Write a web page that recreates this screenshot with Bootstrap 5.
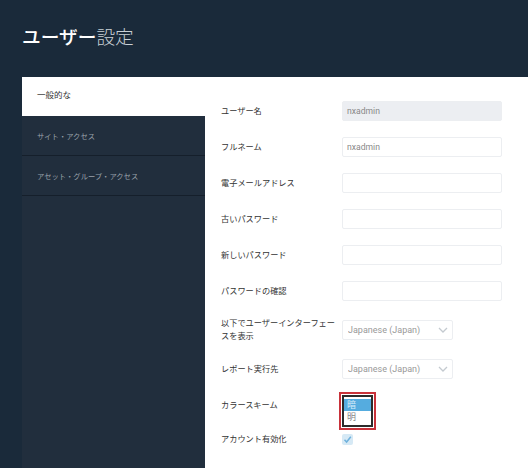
<!DOCTYPE html>
<html lang="ja">
<head>
<meta charset="utf-8">
<title>ユーザー設定</title>
<link href="https://cdn.jsdelivr.net/npm/bootstrap@5.3.0/dist/css/bootstrap.min.css" rel="stylesheet">
<style>
html,body{height:100%;overflow:hidden}
body{background:#1a2a3a;font-family:Roboto,"Noto Sans CJK JP",sans-serif;font-size:9px;color:#333}
.page-head{height:77px;padding-left:22px;padding-top:25px}
.page-ttl{font-size:18.7px;line-height:26px;margin:0;font-weight:300;color:#c9d0d6}
.page-ttl b{color:#fff;font-weight:500}
.panel-wrap{margin-left:22px;height:391px;background:#fff}
.side-nav{width:183px;flex:none;background:#212e3d;border-radius:0}
.side-nav .list-group-item{height:40px;padding:15px 15px 0;font-size:7.3px;line-height:11px;background:#212e3d;color:#9aa2ab;border:0;border-bottom:1px solid #151f2b;border-radius:0}
.side-nav .list-group-item.active{background:#fff;color:#333;border-bottom:0;height:39px;padding-top:13px;font-size:8.5px}
.form-area{padding:24px 0 0 16px;width:323px}
.frm-row{display:flex;align-items:center;min-height:20px;margin-bottom:16px}
.frm-row.gap-s{margin-bottom:13px}
.frm-lbl{width:121px;flex:none;font-size:8.2px;line-height:13px;padding-right:4px;margin:0;color:#333}
.frm-lbl.wide-txt{padding-right:0}
.form-control.fld,.form-select.fld{height:20px;min-height:20px;padding:0 4px;font-size:8.6px;line-height:18px;color:#888;border:1px solid #eceef1;border-radius:2px;box-shadow:none}
.form-control.fld{width:160px}
.form-control.fld:disabled{background:#eceef2}
.form-select.fld{width:111px;padding-left:5px;font-size:9px;color:#999;background-size:10px 6px;background-position:right 4px center;background-image:url("data:image/svg+xml,%3csvg xmlns='http://www.w3.org/2000/svg' viewBox='0 0 10 6'%3e%3cpath fill='none' stroke='%23c4cad0' stroke-width='1.3' d='M1 1l4 4 4-4'/%3e%3c/svg%3e")}
.lst-row{align-items:flex-start;margin-bottom:3px}
.lst-row .frm-lbl{padding-top:7px}
.lst-frame{border:2px solid #c8323a;padding:1px;width:37px;height:38px;margin-left:-3px}
.lst-inner{border:2px solid #2b2b2b;padding-top:2px;height:32px;background:#fff;font-size:9px;line-height:12px;color:#888}
.lst-inner div{height:12px;padding-left:3px}
.lst-inner .on{background:#55acdf;color:#d9eefa}
.chk-row{min-height:12px;margin:0}
.chk-box{width:11px;height:11px;margin:0;border-radius:2px;background:#d6e9f5;display:flex;align-items:center;justify-content:center}
</style>
</head>
<body>
<div class="page-head"><h1 class="page-ttl"><b>ユーザー</b>設定</h1></div>
<div class="panel-wrap d-flex">
  <div class="list-group side-nav">
    <a class="list-group-item active" href="#">一般的な</a>
    <a class="list-group-item" href="#">サイト・アクセス</a>
    <a class="list-group-item" href="#">アセット・グループ・アクセス</a>
  </div>
  <form class="form-area">
    <div class="frm-row"><label class="frm-lbl">ユーザー名</label><input class="form-control fld" value="nxadmin" disabled></div>
    <div class="frm-row"><label class="frm-lbl">フルネーム</label><input class="form-control fld" value="nxadmin"></div>
    <div class="frm-row"><label class="frm-lbl">電子メールアドレス</label><input class="form-control fld"></div>
    <div class="frm-row"><label class="frm-lbl">古いパスワード</label><input class="form-control fld"></div>
    <div class="frm-row"><label class="frm-lbl">新しいパスワード</label><input class="form-control fld"></div>
    <div class="frm-row"><label class="frm-lbl">パスワードの確認</label><input class="form-control fld"></div>
    <div class="frm-row"><label class="frm-lbl wide-txt">以下でユーザーインターフェースを表示</label><select class="form-select fld"><option>Japanese (Japan)</option></select></div>
    <div class="frm-row gap-s"><label class="frm-lbl">レポート実行先</label><select class="form-select fld"><option>Japanese (Japan)</option></select></div>
    <div class="frm-row lst-row"><label class="frm-lbl">カラースキーム</label><div class="lst-frame"><div class="lst-inner"><div class="on">暗</div><div>明</div></div></div></div>
    <div class="frm-row chk-row"><label class="frm-lbl">アカウント有効化</label><div class="chk-box"><svg width="9" height="9" viewBox="0 0 9 9"><path d="M1.5 4.8 3.6 7 7.8 1.8" fill="none" stroke="#6fb1dc" stroke-width="1.5"/></svg></div></div>
  </form>
</div>
</body>
</html>
